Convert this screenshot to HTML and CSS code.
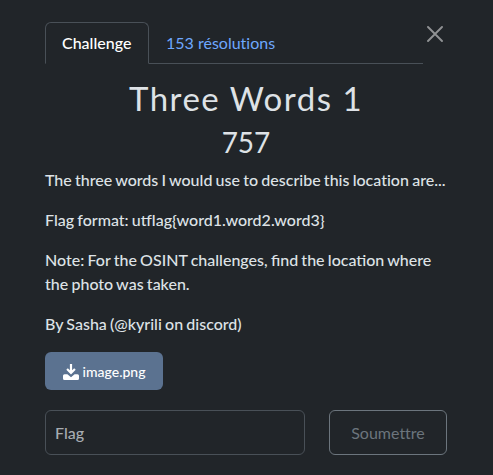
FILE: index.html
```html
<!DOCTYPE html>
<html lang="fr">
<head>
<meta charset="utf-8">
<title>Three Words 1</title>
<link rel="stylesheet" href="styles.css">
</head>
<body>
<main class="modal">
  <header class="top">
    <nav class="tabs">
      <a class="tab active">Challenge</a>
      <a class="tab">153 résolutions</a>
    </nav>
    <button class="close" aria-label="Fermer"><svg viewBox="0 0 16 16" width="16" height="16"><path d="M1 1L15 15M15 1L1 15"/></svg></button>
  </header>
  <h2 class="name">Three Words 1</h2>
  <h3 class="value">757</h3>
  <div class="desc">
    <p>The three words I would use to describe this location are...</p>
    <p class="lig">Flag format: utflag{word1.word2.word3}</p>
    <p class="lig">Note: For the OSINT challenges, find the loca&zwnj;tion where the photo was taken.</p>
    <p>By Sasha (@kyrili on discord)</p>
  </div>
  <a class="file"><svg viewBox="0 0 16 16" width="16" height="16"><path d="M6.900 0h2.200v6.300l2.100-2.100 1.500 1.500L8 10.400 3.300 5.700l1.500-1.500 2.100 2.100zM1.500 10.300h2.900L8 13.200l3.600-2.900h2.900a1.500 1.500 0 0 1 1.500 1.500v2.700a1.500 1.500 0 0 1-1.500 1.500h-13A1.500 1.500 0 0 1 0 14.500v-2.700a1.500 1.500 0 0 1 1.500-1.500z"/></svg><span>image.png</span></a>
  <form class="answer">
    <input class="flag" type="text" placeholder="Flag">
    <button class="submit" type="button">Soumettre</button>
  </form>
</main>
</body>
</html>
```
FILE: styles.css
```css
* { box-sizing: border-box; }
body {
  margin: 0;
  background: #212529;
  color: #dee2e6;
  font: 400 16px/24px Lato, sans-serif;
  font-variant-ligatures: none;
}
.modal { width: 493px; height: 475px; padding: 22px 46px 0 45px; overflow: hidden; }
.top { display: flex; justify-content: space-between; height: 42px; }
.tabs { display: flex; width: 378px; border-bottom: 1px solid #495057; }
.tab {
  height: 42px;
  padding: 8px 16px;
  border: 1px solid transparent;
  border-radius: 6px 6px 0 0;
  color: #6ea8fe;
}
.active { width: 104px; font-weight: 500; color: #fff; background: #212529; border-color: #495057 #495057 #212529; }
.close { width: 16px; height: 16px; margin: 4px 4px 0 0; padding: 0; border: 0; background: none; }
.close svg { display: block; fill: none; stroke: #909294; stroke-width: 1.9; stroke-linecap: round; }
.name { margin: 15px 0 0; font-size: 33px; line-height: 38px; font-weight: 400; letter-spacing: 1.5px; text-align: center; }
.value { margin: 8px 0 0; font-size: 28px; line-height: 34px; font-weight: 400; text-align: center; }
.desc { margin: 9px -4px 0 0; font-weight: 500; word-spacing: -0.8px; }
.desc p { margin: 0 0 16px; }
.desc .lig { font-variant-ligatures: normal; }
.file {
  display: flex;
  align-items: center;
  justify-content: center;
  gap: 4px;
  width: 118px;
  height: 38px;
  padding-top: 1px;
  border-radius: 6px;
  background: #5b7290;
  color: #fff;
  font-size: 14px;
  font-weight: 500;
}
.file svg { fill: #fff; }
.answer { display: flex; gap: 24px; margin-top: 20px; }
.flag {
  width: 260px;
  height: 45px;
  padding: 0 9px;
  border: 1px solid #495057;
  border-radius: 6px;
  background: #212529;
  font: inherit;
  font-weight: 500;
}
.flag::placeholder { color: #a7acb1; opacity: 1; }
.submit { width: 118px; height: 45px; border: 1px solid #6c757d; border-radius: 6px; background: none; color: #6c757d; font: inherit; padding: 0; }
```
